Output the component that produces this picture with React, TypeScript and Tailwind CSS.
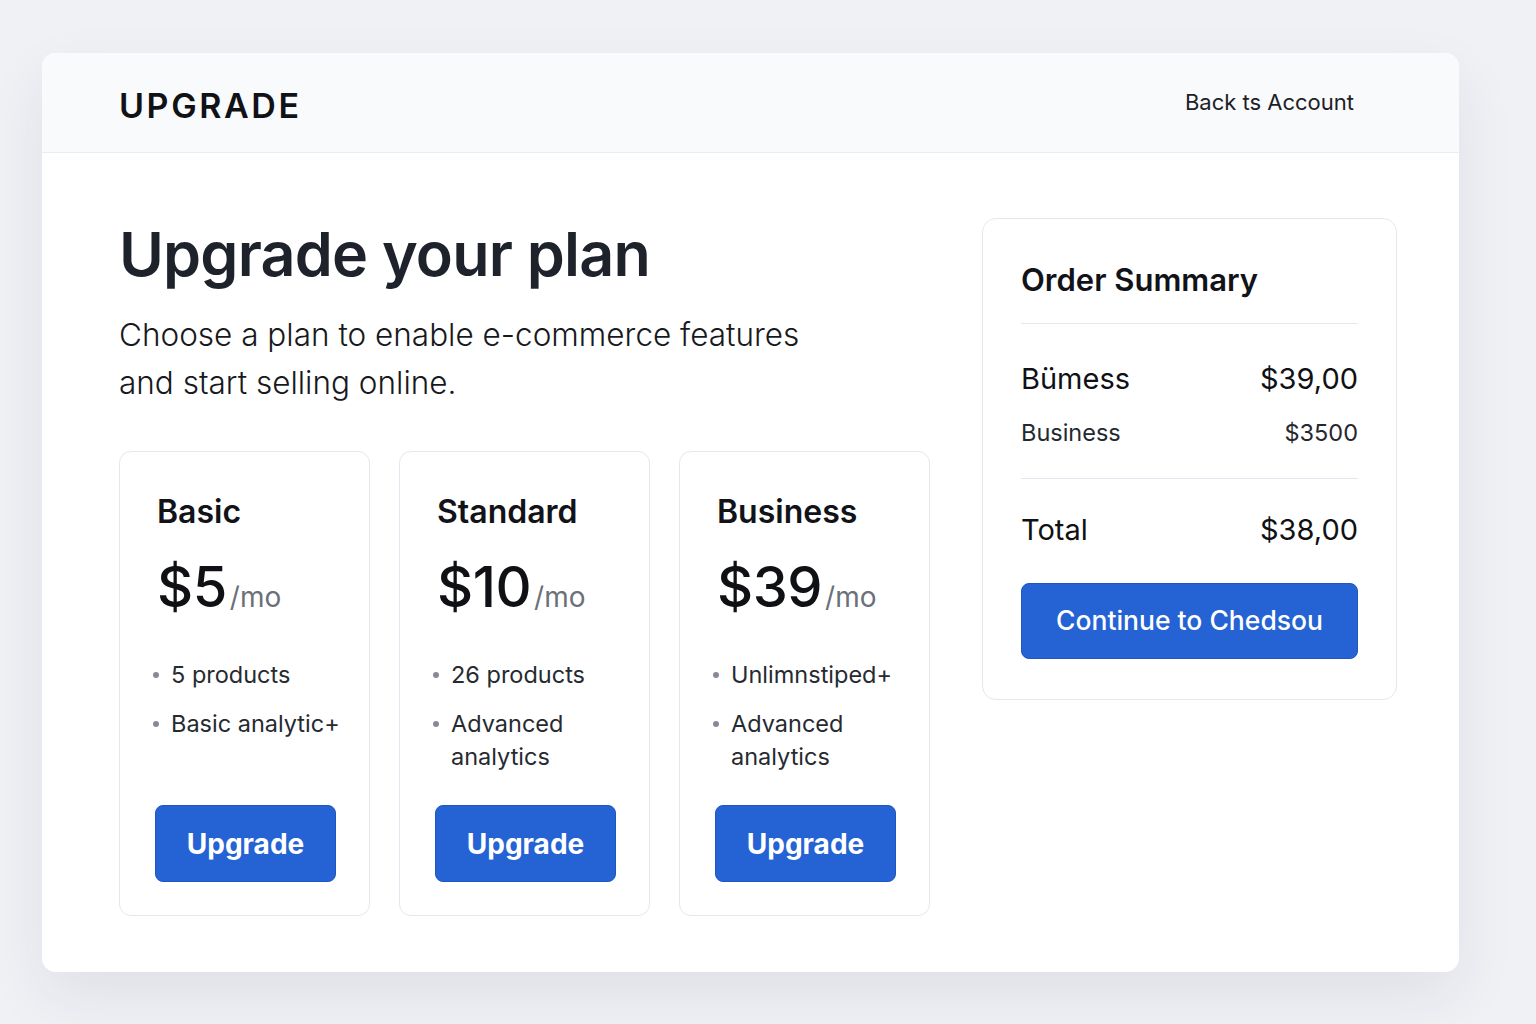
import React from 'react';

type Plan = {
  name: string;
  price: string;
  features: string[];
};

const plans: Plan[] = [
  { name: 'Basic', price: '$5', features: ['5 products', 'Basic analytic+'] },
  { name: 'Standard', price: '$10', features: ['26 products', 'Advanced analytics'] },
  { name: 'Business', price: '$39', features: ['Unlimnstiped+', 'Advanced analytics'] },
];

function PlanCard({ plan }: { plan: Plan }) {
  return (
    <div className="flex h-[465px] w-[251px] flex-col rounded-[12px] border border-[#e3e8f0] bg-white pl-[37px] pr-[22px] pt-[42px] pb-[33px]">
      <h3 className="text-[32px] leading-[36px] font-semibold text-[#111318]">{plan.name}</h3>
      <div className="mt-[29px] flex items-baseline">
        <span className="text-[56px] leading-[56px] font-medium tracking-[-0.5px] text-[#0f1115]">{plan.price}</span>
        <span className="ml-[3px] text-[28px] leading-[56px] text-[#6b7079]">/mo</span>
      </div>
      {/* Features */}
      <ul className="mt-[33px] space-y-[16px] -ml-[4px]">
        {plan.features.map((f) => (
          <li key={f} className="flex items-start gap-[12px] text-[23.5px] leading-[33px] text-[#262a31]">
            <span className="mt-[14px] h-[6px] w-[6px] shrink-0 rounded-full bg-[#868b93]" />
            <span>{f}</span>
          </li>
        ))}
      </ul>
      <button className="mt-auto -ml-[2px] h-[77px] w-[181px] rounded-[8px] border border-[#1d57c4] bg-[#2563d4] text-[28px] font-bold text-white">
        Upgrade
      </button>
    </div>
  );
}

function SummaryRow({ label, value, small }: { label: string; value: string; small?: boolean }) {
  return (
    <div
      className={
        small
          ? 'flex items-center justify-between text-[23.5px] leading-[30px] text-[#25292f]'
          : 'flex items-center justify-between text-[29px] leading-[34px] text-[#0f1115]'
      }
    >
      <span>{label}</span>
      <span>{value}</span>
    </div>
  );
}

export default function App() {
  return (
    <div
      className="min-h-screen bg-[#f0f1f5] pt-[53px] pl-[42px]"
      style={{ fontFamily: 'Inter, "Noto Sans", "Liberation Sans", sans-serif' }}
    >
      <div className="h-[919px] w-[1417px] overflow-hidden rounded-[14px] bg-white shadow-[0_24px_60px_rgba(30,35,60,0.08)]">
        {/* Header */}
        <header className="flex h-[100px] items-center justify-between border-b border-[#e9edf3] bg-[#f9fafc] pl-[77px] pr-[105px]">
          <span className="mt-[6px] text-[34px] font-semibold tracking-[2.6px] text-[#111216]">UPGRADE</span>
          <a className="text-[22px] text-[#1d2026]">Back ts Account</a>
        </header>

        <div className="flex pl-[77px] pt-[68px]">
          {/* Left column */}
          <div className="w-[811px]">
            <h1 className="text-[61px] leading-[66px] font-semibold tracking-[-0.8px] text-[#1e222b]">Upgrade your plan</h1>
            <p className="mt-[24px] w-[720px] text-[31.5px] leading-[48px] font-light text-[#17191d]">
              Choose a plan to enable e-commerce features and start selling online.
            </p>
            <div className="mt-[44px] flex gap-[29px]">
              {plans.map((p) => (
                <PlanCard key={p.name} plan={p} />
              ))}
            </div>
          </div>

          {/* Order summary */}
          <div className="ml-[52px] mt-[-3px] h-[482px] w-[415px] rounded-[14px] border border-[#e3e8f0] bg-white px-[38px] pt-[43px]">
            <h2 className="text-[31px] leading-[36px] font-semibold text-[#111318]">Order Summary</h2>
            <div className="mt-[25px] border-t border-[#e3e8f0]" />
            <div className="mt-[38px]">
              <SummaryRow label="Bümess" value="$39,00" />
            </div>
            <div className="mt-[22px]">
              <SummaryRow label="Business" value="$3500" small />
            </div>
            <div className="mt-[30px] border-t border-[#e3e8f0]" />
            <div className="mt-[34px]">
              <SummaryRow label="Total" value="$38,00" />
            </div>
            <button className="mt-[36px] h-[76px] w-full rounded-[8px] border border-[#1d57c4] bg-[#2563d4] text-[26.5px] font-medium text-white">
              Continue to Chedsou
            </button>
          </div>
        </div>
      </div>
    </div>
  );
}
